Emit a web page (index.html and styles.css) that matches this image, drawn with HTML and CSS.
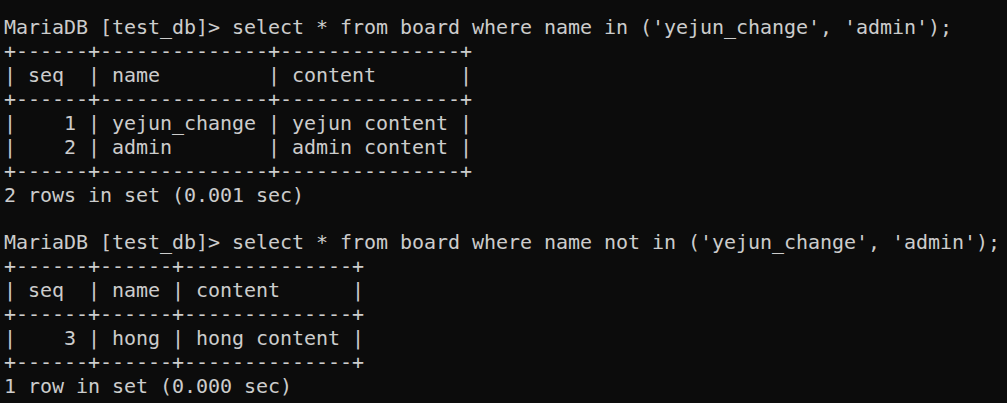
FILE: index.html
```html
<!DOCTYPE html>
<html>
<head>
<meta charset="utf-8">
<link rel="stylesheet" href="styles.css">
</head>
<body class="terminal">
<pre class="output">MariaDB [test_db]&gt; select * from board where name in ('yejun_change', 'admin');
+------+--------------+---------------+
| seq  | name         | content       |
+------+--------------+---------------+
|    1 | yejun_change | yejun content |
|    2 | admin        | admin content |
+------+--------------+---------------+
2 rows in set (0.001 sec)

MariaDB [test_db]&gt; select * from board where name not in ('yejun_change', 'admin');
+------+------+--------------+
| seq  | name | content      |
+------+------+--------------+
|    3 | hong | hong content |
+------+------+--------------+
1 row in set (0.000 sec)</pre>
</body>
</html>
```
FILE: styles.css
```css
html, body {
  margin: 0;
  background: #0c0c0c;
}
.terminal {
  width: 1007px;
  height: 403px;
  overflow: hidden;
  padding: 16px 0 0 4px;
  box-sizing: border-box;
}
.output {
  margin: 0;
  font-family: "DejaVu Sans Mono", "Liberation Mono", monospace;
  font-size: 20px;
  line-height: 23.93px;
  letter-spacing: -0.04px;
  color: #cccccc;
  white-space: pre;
}
```
